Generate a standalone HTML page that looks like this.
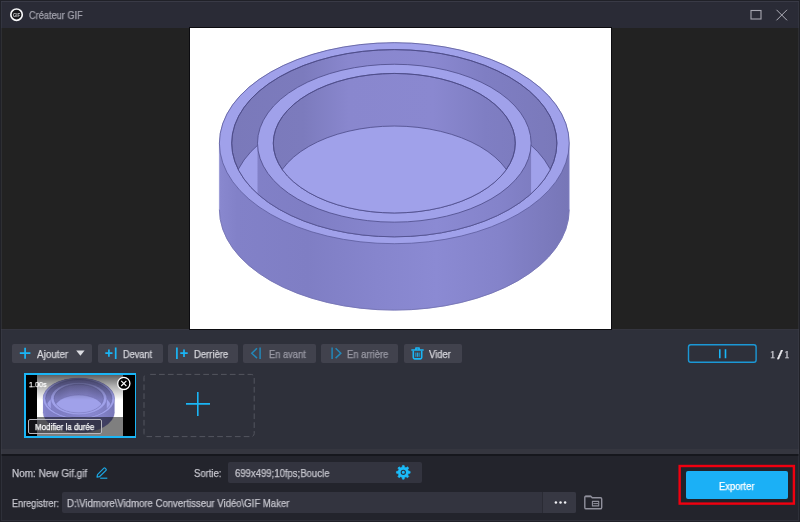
<!DOCTYPE html>
<html lang="fr">
<head>
<meta charset="utf-8">
<title>Créateur GIF</title>
<style>
html,body{margin:0;padding:0;}
body{width:800px;height:522px;overflow:hidden;background:#2f303b;font-family:"Liberation Sans",sans-serif;font-size:10px;color:#d6d6dc;position:relative;}
.abs{position:absolute;}
.tx{position:absolute;white-space:nowrap;transform-origin:0 0;will-change:transform;-webkit-text-stroke:0.25px;font-family:"Liberation Sans",sans-serif;}
#win{position:absolute;left:0;top:0;width:800px;height:522px;overflow:hidden;background:#2f303b;}
#titlebar{position:absolute;left:0;top:0;width:800px;height:28px;background:#2a2b36;}
#topline{position:absolute;left:0;top:0;width:800px;height:2px;background:linear-gradient(to bottom,#1e1f26 0,#1e1f26 50%,#33343f 50%,#33343f 100%);}
#preview{position:absolute;left:0;top:28px;width:800px;height:301px;background:#222222;}
#canvas{position:absolute;left:190px;top:28px;width:421px;height:301px;background:#fff;overflow:hidden;}
#canvasborder{position:absolute;left:188.7px;top:27px;width:423.3px;height:303px;background:#0c0c10;}
#panel{position:absolute;left:0;top:329px;width:800px;height:125px;background:#2e303a;border-top:1px solid #34353f;box-sizing:border-box;}
#strip{position:absolute;left:0;top:449px;width:800px;height:5px;background:#35363f;}
#bottom{position:absolute;left:0;top:456px;width:800px;height:66px;background:#23242c;}
#sep{position:absolute;left:0;top:454px;width:800px;height:2px;background:#16171d;}
.btn{position:absolute;top:344px;height:19px;background:#41424d;border-radius:2px;}
.field{position:absolute;background:#33343f;border-radius:2px;}
#thumbo{position:absolute;left:24.05px;top:373.2px;width:112.2px;height:64.6px;background:#1ab5f5;}
#thumb{position:absolute;left:25.55px;top:374.7px;width:109.2px;height:61.6px;background:#000;overflow:hidden;}
#thumbimg{position:absolute;left:11.75px;top:0;width:86.1px;height:61.6px;background:#fff;}
#thumbtop{position:absolute;left:0;top:0;width:110px;height:25px;background:linear-gradient(to bottom,rgba(0,0,0,0.62),rgba(0,0,0,0.3) 45%,rgba(0,0,0,0));}
#thumbbar{position:absolute;left:0;top:42.6px;width:110px;height:19px;background:rgba(0,0,0,0.5);}
#mod{position:absolute;left:28.3px;top:419.3px;width:72px;height:13px;border:1px solid #b8b8c0;border-radius:2px;background:rgba(40,40,48,0.5);}
</style>
</head>
<body>
<div id="win">
  <div id="titlebar"></div>
  <div id="topline"></div>
  <svg class="abs" style="left:8px;top:6px;will-change:transform" width="18" height="18" viewBox="8 6 18 18">
    <circle cx="16.55" cy="14.65" r="5.7" fill="#17171b" stroke="#f8f8fa" stroke-width="1.65"/>
    <text x="16.6" y="16.8" font-family="Liberation Sans, sans-serif" font-size="5.8" font-weight="bold" fill="#c4c4c8" text-anchor="middle" textLength="7.4" lengthAdjust="spacingAndGlyphs">GIF</text>
  </svg>
  <svg class="abs" style="left:745px;top:5px" width="50" height="20" viewBox="745 5 50 20">
    <rect x="751" y="10.5" width="10" height="8.5" fill="none" stroke="#a6a6b0" stroke-width="1.1"/>
    <path d="M776.5 9.8 L787 20.3 M787 9.8 L776.5 20.3" stroke="#b0b0ba" stroke-width="1" fill="none"/>
  </svg>

  <div id="preview"></div>
  <div id="panel"></div>
  <div id="strip"></div>
  <div id="canvasborder"></div>
  <div id="canvas">
    <svg class="abs" style="left:0;top:0" width="421" height="301" viewBox="190 28 421 301">
<defs>
<linearGradient id="gOut" gradientUnits="userSpaceOnUse" x1="219.4" y1="0" x2="569.2" y2="0"><stop offset="0" stop-color="#8988cf"/><stop offset="0.05" stop-color="#8281c8"/><stop offset="0.25" stop-color="#7f7ec4"/><stop offset="0.45" stop-color="#8685cd"/><stop offset="0.62" stop-color="#8b8ad3"/><stop offset="0.8" stop-color="#8483ca"/><stop offset="1" stop-color="#7776b7"/></linearGradient>
<linearGradient id="gIn" gradientUnits="userSpaceOnUse" x1="231.7" y1="0" x2="556.9" y2="0"><stop offset="0" stop-color="#7a79ba"/><stop offset="0.22" stop-color="#7c7bbd"/><stop offset="0.36" stop-color="#8987ce"/><stop offset="0.62" stop-color="#8a88d0"/><stop offset="0.78" stop-color="#7f7ec3"/><stop offset="1" stop-color="#7a79ba"/></linearGradient>
<clipPath id="cE2"><ellipse cx="394.3" cy="143.20" rx="162.6" ry="93.6"/></clipPath>
<clipPath id="cE4"><ellipse cx="394.3" cy="143.20" rx="121.0" ry="69.75"/></clipPath>
</defs>
<path d="M219.40 143.20 A174.9 100.5 0 0 1 569.20 143.20 L569.20 209.60 A174.9 100.5 0 0 1 219.40 209.60 Z" fill="url(#gOut)" stroke="#8a89cf" stroke-width="0.6"/>
<path d="M569.20 209.60 A174.9 100.5 0 0 1 219.40 209.60" fill="none" stroke="#6a69aa" stroke-width="0.7"/>
<ellipse cx="394.3" cy="143.20" rx="174.9" ry="100.5" fill="#a0a1ea" stroke="#5a599a" stroke-width="0.75"/>
<ellipse cx="394.3" cy="143.20" rx="162.6" ry="93.6" fill="url(#gIn)" stroke="#4b4a86" stroke-width="0.8"/>
<g clip-path="url(#cE2)">
<ellipse cx="394.3" cy="195.80" rx="162.6" ry="93.6" fill="#a0a1ea" stroke="#4b4a86" stroke-width="0.8"/>
<path d="M257.50 143.20 A136.8 78.95 0 0 1 531.10 143.20 L531.10 195.80 A136.8 78.95 0 0 1 257.50 195.80 Z" fill="url(#gOut)"/>
<path d="M531.10 195.80 A136.8 78.95 0 0 1 257.50 195.80" fill="none" stroke="#4b4a86" stroke-width="0.8"/>
</g>
<ellipse cx="394.3" cy="143.20" rx="162.6" ry="93.6" fill="none" stroke="#4b4a86" stroke-width="0.8"/>
<ellipse cx="394.3" cy="143.20" rx="136.8" ry="78.95" fill="#a0a1ea" stroke="#4b4a86" stroke-width="0.8"/>
<ellipse cx="394.3" cy="143.20" rx="121.0" ry="69.75" fill="url(#gIn)" stroke="#4b4a86" stroke-width="0.8"/>
<g clip-path="url(#cE4)">
<ellipse cx="394.3" cy="195.80" rx="121.0" ry="69.75" fill="#a0a1ea" stroke="#4b4a86" stroke-width="0.8"/>
</g>
<ellipse cx="394.3" cy="143.20" rx="121.0" ry="69.75" fill="none" stroke="#4b4a86" stroke-width="0.8"/>
    </svg>
  </div>


  <!-- toolbar -->
  <div class="btn" style="left:11.7px;width:80.3px"></div>
  <div class="btn" style="left:97.5px;width:65px"></div>
  <div class="btn" style="left:168.2px;width:69.5px"></div>
  <div class="btn" style="left:243.3px;width:72.4px"></div>
  <div class="btn" style="left:321.3px;width:76.7px"></div>
  <div class="btn" style="left:403.8px;width:58px"></div>
  <svg class="abs" style="left:0;top:340px" width="800" height="28" viewBox="0 340 800 28">
    <g stroke="#1ab5f5" stroke-width="1.7" fill="none">
      <path d="M19.8 353.2 H30.4 M25.1 347.8 V358.7"/>
      <path d="M105.3 353.2 H112.5 M108.9 349.6 V356.8 M115.7 347.5 V358.9"/>
      <path d="M176.9 347.5 V358.9 M180.3 353.2 H187.7 M184 349.5 V356.9"/>
    </g>
    <path d="M76.2 350.6 H84.6 L80.4 355.7 Z" fill="#dcdce2"/>
    <g stroke="#2387b8" stroke-width="1.5" fill="none">
      <path d="M257 348.3 L251.8 353.2 L257 358.1 M260.1 347.5 V358.9"/>
      <path d="M332.1 347.5 V358.9 M335.6 348.3 L340.8 353.2 L335.6 358.1"/>
    </g>
    <!-- trash -->
    <g stroke="#1ab5f5" stroke-width="1.6" fill="none" stroke-linejoin="round" stroke-linecap="round">
      <path d="M411.9 350 H423.1 M415.9 349.4 V348 H419.1 V349.4"/>
      <path d="M413.3 351.3 V357.6 Q413.3 358.9 414.6 358.9 H420.4 Q421.7 358.9 421.7 357.6 V351.3"/>
      <path d="M415.9 352.6 V356.8 M417.5 352.6 V356.8 M419.1 352.6 V356.8" stroke-width="0.9" stroke-linecap="butt"/>
    </g>
    <!-- pause -->
    <rect x="688.5" y="344.7" width="67.6" height="17.5" rx="2.2" fill="none" stroke="#1b98d6" stroke-width="1.4"/>
    <path d="M719.8 349.2 V358.3 M725.5 349.2 V358.3" stroke="#1ab5f5" stroke-width="1.6"/>
  </svg>

  <!-- thumbnails -->
  <div id="thumbo"></div>
  <div id="thumb">
    <div id="thumbimg">
      <svg class="abs" style="left:0;top:0" width="86.1" height="61.6" viewBox="190 28 421 301" preserveAspectRatio="none">
<defs>
<linearGradient id="tgOut" gradientUnits="userSpaceOnUse" x1="219.4" y1="0" x2="569.2" y2="0"><stop offset="0" stop-color="#8988cf"/><stop offset="0.05" stop-color="#8281c8"/><stop offset="0.25" stop-color="#7f7ec4"/><stop offset="0.45" stop-color="#8685cd"/><stop offset="0.62" stop-color="#8b8ad3"/><stop offset="0.8" stop-color="#8483ca"/><stop offset="1" stop-color="#7776b7"/></linearGradient>
<linearGradient id="tgIn" gradientUnits="userSpaceOnUse" x1="231.7" y1="0" x2="556.9" y2="0"><stop offset="0" stop-color="#7a79ba"/><stop offset="0.22" stop-color="#7c7bbd"/><stop offset="0.36" stop-color="#8987ce"/><stop offset="0.62" stop-color="#8a88d0"/><stop offset="0.78" stop-color="#7f7ec3"/><stop offset="1" stop-color="#7a79ba"/></linearGradient>
<clipPath id="tcE2"><ellipse cx="394.3" cy="143.20" rx="162.6" ry="93.6"/></clipPath>
<clipPath id="tcE4"><ellipse cx="394.3" cy="143.20" rx="121.0" ry="69.75"/></clipPath>
</defs>
<path d="M219.40 143.20 A174.9 100.5 0 0 1 569.20 143.20 L569.20 209.60 A174.9 100.5 0 0 1 219.40 209.60 Z" fill="url(#tgOut)" stroke="#8a89cf" stroke-width="0.6"/>
<path d="M569.20 209.60 A174.9 100.5 0 0 1 219.40 209.60" fill="none" stroke="#6a69aa" stroke-width="0.7"/>
<ellipse cx="394.3" cy="143.20" rx="174.9" ry="100.5" fill="#a0a1ea" stroke="#5a599a" stroke-width="0.75"/>
<ellipse cx="394.3" cy="143.20" rx="162.6" ry="93.6" fill="url(#tgIn)" stroke="#4b4a86" stroke-width="0.8"/>
<g clip-path="url(#tcE2)">
<ellipse cx="394.3" cy="195.80" rx="162.6" ry="93.6" fill="#a0a1ea" stroke="#4b4a86" stroke-width="0.8"/>
<path d="M257.50 143.20 A136.8 78.95 0 0 1 531.10 143.20 L531.10 195.80 A136.8 78.95 0 0 1 257.50 195.80 Z" fill="url(#tgOut)"/>
<path d="M531.10 195.80 A136.8 78.95 0 0 1 257.50 195.80" fill="none" stroke="#4b4a86" stroke-width="0.8"/>
</g>
<ellipse cx="394.3" cy="143.20" rx="162.6" ry="93.6" fill="none" stroke="#4b4a86" stroke-width="0.8"/>
<ellipse cx="394.3" cy="143.20" rx="136.8" ry="78.95" fill="#a0a1ea" stroke="#4b4a86" stroke-width="0.8"/>
<ellipse cx="394.3" cy="143.20" rx="121.0" ry="69.75" fill="url(#tgIn)" stroke="#4b4a86" stroke-width="0.8"/>
<g clip-path="url(#tcE4)">
<ellipse cx="394.3" cy="195.80" rx="121.0" ry="69.75" fill="#a0a1ea" stroke="#4b4a86" stroke-width="0.8"/>
</g>
<ellipse cx="394.3" cy="143.20" rx="121.0" ry="69.75" fill="none" stroke="#4b4a86" stroke-width="0.8"/>
      </svg>
    </div>
    <div id="thumbtop"></div>
    <div id="thumbbar"></div>
  </div>
  <div id="mod"></div>
  <div class="tx" style="left:29.30px;top:380.40px;font-size:8px;line-height:10px;color:#ffffff;transform:scaleX(0.9043);">1.00s</div>
  <div class="tx" style="left:35.00px;top:422.40px;font-size:9px;line-height:11px;color:#ffffff;transform:scaleX(0.8847);">Modifier la durée</div>
  <svg class="abs" style="left:115px;top:375px" width="18" height="18" viewBox="115 375 18 18">
    <circle cx="123.8" cy="383.4" r="6.1" fill="#000" stroke="#fff" stroke-width="1.3"/>
    <path d="M121.2 380.8 L126.4 386 M126.4 380.8 L121.2 386" stroke="#fff" stroke-width="1.1"/>
  </svg>
  <svg class="abs" style="left:140px;top:370px" width="120" height="72" viewBox="140 370 120 72"><rect x="144" y="374.4" width="110.2" height="62.2" rx="3" fill="none" stroke="#53555f" stroke-width="1" stroke-dasharray="5.7 3.15" stroke-dashoffset="-3.2"/></svg>
  <svg class="abs" style="left:180px;top:386px" width="36" height="36" viewBox="180 386 36 36">
    <path d="M186 403.9 H210 M197.8 391.9 V415.9" stroke="#1ab5f5" stroke-width="1.6"/>
  </svg>

  <div id="sep"></div>
  <div id="bottom"></div>

  <!-- bottom bar -->
  <svg class="abs" style="left:94px;top:466px" width="16" height="15" viewBox="94 466 16 15">
    <g stroke="#1ba6e2" stroke-width="1.2" fill="none" stroke-linejoin="round">
      <path d="M97.5 474.7 L103.9 468.2 Q104.5 467.6 105.1 468.2 L106 469.1 Q106.6 469.7 106 470.3 L99.4 476.7 L97 477.2 Z"/>
      <path d="M100.2 478.2 H107.3"/>
    </g>
  </svg>
  <div class="field" style="left:228px;top:462.3px;width:194px;height:20.7px"></div>
  <svg class="abs" style="left:394px;top:463px" width="19" height="19" viewBox="394 463 19 19">
    <path d="M402.09 467.24 L402.44 465.45 L404.16 465.45 L404.51 467.24 L406.02 467.87 L407.53 466.85 L408.75 468.07 L407.73 469.58 L408.36 471.09 L410.15 471.44 L410.15 473.16 L408.36 473.51 L407.73 475.02 L408.75 476.53 L407.53 477.75 L406.02 476.73 L404.51 477.36 L404.16 479.15 L402.44 479.15 L402.09 477.36 L400.58 476.73 L399.07 477.75 L397.85 476.53 L398.87 475.02 L398.24 473.51 L396.45 473.16 L396.45 471.44 L398.24 471.09 L398.87 469.58 L397.85 468.07 L399.07 466.85 L400.58 467.87 Z" fill="#1bbcfa" stroke="#1bbcfa" stroke-width="0.6" stroke-linejoin="round"/>
    <circle cx="403.3" cy="472.3" r="2.1" fill="#1bbcfa" stroke="#2a3340" stroke-width="1.1"/>
  </svg>

  <div class="field" style="left:62px;top:492.2px;width:514px;height:20.4px"></div>
  <div class="abs" style="left:542.4px;top:492.2px;width:33.6px;height:20.4px;background:#373843;border-radius:0 2px 2px 0;border-left:1px solid #2a2b34;box-sizing:border-box"></div>
  <svg class="abs" style="left:550px;top:493px" width="60" height="20" viewBox="550 493 60 20">
    <circle cx="555.9" cy="502.6" r="1.25" fill="#f0f0f4"/>
    <circle cx="560.5" cy="502.6" r="1.25" fill="#f0f0f4"/>
    <circle cx="565.1" cy="502.6" r="1.25" fill="#f0f0f4"/>
    <g stroke="#90909c" stroke-width="1.4" fill="none" stroke-linejoin="round">
      <path d="M584.8 497.3 Q584.8 496.2 585.8 496.2 H590.8 L592.2 497.8 H600.5 Q601.7 497.8 601.7 499 V507.6 Q601.7 508.8 600.5 508.8 H586 Q584.8 508.8 584.8 507.6 Z"/>
      <rect x="592.4" y="501.4" width="6.3" height="4.5" stroke-width="1.1"/>
      <path d="M593.3 503.6 H598" stroke-width="1"/>
      <path d="M585.2 496.5 H590.8" stroke-width="1.6"/>
    </g>
  </svg>

  <!-- export -->
  <svg class="abs" style="left:675px;top:461px" width="125" height="48" viewBox="675 461 125 48"><rect x="679.65" y="466" width="114.25" height="37.6" fill="#21222a" stroke="#f00010" stroke-width="2.4"/></svg>
  <div class="abs" style="left:685.8px;top:471px;width:102.3px;height:28px;background:#1bb0f6;border-radius:2px"></div>

  <div class="tx" style="left:770.2px;top:346.5px;font-family:'Liberation Serif',serif;font-size:10.5px;line-height:14px;color:#cfcfd6;will-change:transform">1<span style="font-family:'Liberation Sans',sans-serif;font-size:13.5px;color:#ececf0;position:relative;top:0.6px;display:inline-block;transform:scaleX(1.45);margin:0 2.6px 0 2.6px">/</span>1</div>
  <div class="tx" style="left:29.30px;top:9.70px;font-size:10px;line-height:12px;color:#a2a2ac;transform:scaleX(0.9204);">Créateur GIF</div>
  <div class="tx" style="left:37.30px;top:348.90px;font-size:10px;line-height:12px;color:#d6d6dc;transform:scaleX(0.9848);">Ajouter</div>
  <div class="tx" style="left:123.20px;top:348.90px;font-size:10px;line-height:12px;color:#d6d6dc;transform:scaleX(0.9153);">Devant</div>
  <div class="tx" style="left:193.90px;top:348.90px;font-size:10px;line-height:12px;color:#d6d6dc;transform:scaleX(0.9470);">Derrière</div>
  <div class="tx" style="left:268.90px;top:348.90px;font-size:10px;line-height:12px;color:#9a9aa5;transform:scaleX(0.9298);">En avant</div>
  <div class="tx" style="left:347.10px;top:348.90px;font-size:10px;line-height:12px;color:#9a9aa5;transform:scaleX(0.9407);">En arrière</div>
  <div class="tx" style="left:429.40px;top:348.90px;font-size:10px;line-height:12px;color:#d6d6dc;transform:scaleX(0.9412);">Vider</div>
  <div class="tx" style="left:12.00px;top:468.20px;font-size:10px;line-height:12px;color:#c4c4cc;transform:scaleX(0.9938);">Nom: New Gif.gif</div>
  <div class="tx" style="left:193.50px;top:468.20px;font-size:10px;line-height:12px;color:#c4c4cc;transform:scaleX(0.9516);">Sortie:</div>
  <div class="tx" style="left:235.00px;top:468.00px;font-size:10px;line-height:12px;color:#c4c4cc;transform:scaleX(0.9539);">699x499;10fps;Boucle</div>
  <div class="tx" style="left:12.40px;top:498.00px;font-size:10px;line-height:12px;color:#c4c4cc;transform:scaleX(0.9094);">Enregistrer:</div>
  <div class="tx" style="left:66.60px;top:498.00px;font-size:10px;line-height:12px;color:#c4c4cc;transform:scaleX(0.9574);">D:\Vidmore\Vidmore Convertisseur Vidéo\GIF Maker</div>
  <div class="tx" style="left:718.80px;top:480.80px;font-size:10px;line-height:12px;color:#ffffff;transform:scaleX(0.9367);">Exporter</div>
  <div class="abs" style="left:0;top:0;width:798px;height:520px;border:1px solid #202128;pointer-events:none"></div>
  <div class="abs" style="left:1px;top:1px;width:796px;height:518px;border:1px solid rgba(70,72,84,0.35);pointer-events:none"></div>
</div>
</body>
</html>
